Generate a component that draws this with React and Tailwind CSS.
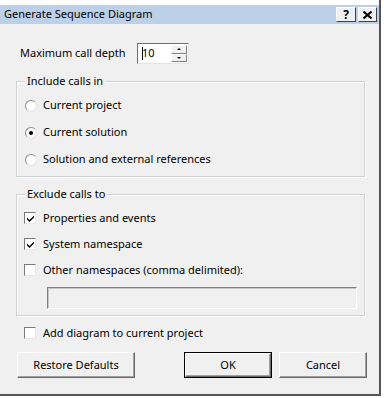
import React from "react";

// Win7 classic-ish dialog bits
function Radio({ checked, label }) {
  return (
    <div className="flex items-center h-[27px] pl-[8px]">
      <span className="w-[12px] h-[12px] rounded-full bg-white border border-t-[#8d8d8d] border-l-[#8d8d8d] border-b-[#e2e2e2] border-r-[#e2e2e2] flex items-center justify-center">
        {checked && <span className="w-[4px] h-[4px] rounded-full bg-black" />}
      </span>
      <span className="ml-[6px]">{label}</span>
    </div>
  );
}

function Check({ checked, label, className = "" }) {
  return (
    <div className={`flex items-center h-[26px] pl-[7px] ${className}`}>
      <span className="w-[12px] h-[12px] bg-white border border-t-[#7a7a7a] border-l-[#7a7a7a] border-b-[#e6e6e6] border-r-[#e6e6e6] flex items-center justify-center">
        {checked && (
          <svg width="9" height="9" viewBox="0 0 9 9">
            <path d="M1 3.5 L3.5 6 L8 1.5 L8 3.5 L3.5 8 L1 5.5 Z" fill="#000" />
          </svg>
        )}
      </span>
      <span className="ml-[7px]">{label}</span>
    </div>
  );
}

function Group({ title, children, className = "" }) {
  return (
    <div
      className={`ml-[16px] w-[349px] border border-[#d0d0d0] shadow-[1px_1px_0_#ffffff,inset_1px_1px_0_#ffffff] ${className}`}
    >
      <div className="-mt-[9px] ml-[8px] px-[2px] w-fit bg-[#f0f0f0] leading-[16px]">
        {title}
      </div>
      {children}
    </div>
  );
}

function Button({ children, primary, className = "" }) {
  return (
    <div
      className={`h-[26px] flex ${primary ? "border border-black" : ""} ${className}`}
    >
      <div className="flex-1 flex items-center justify-center bg-[#f0f0f0] border border-t-white border-l-white border-b-[#696969] border-r-[#696969] shadow-[inset_-1px_-1px_0_#a0a0a0]">
        {children}
      </div>
    </div>
  );
}

export default function App() {
  return (
    <div className="w-[384px] h-[398px] bg-white font-['Noto_Sans',sans-serif] text-[11px] text-black">
      <div className="w-[381px] h-[396px] bg-[#f0f0f0] border-r-2 border-b-2 border-[#555555] flex flex-col">
        {/* title bar */}
        <div className="h-[5px] bg-white" />
        <div className="h-[19px] bg-[#bcd0e8] flex items-center pl-[4px] pr-[2px]">
          <span>Generate Sequence Diagram</span>
          <div className="ml-auto flex gap-[2px]">
            <div className="w-[20px] h-[15px] flex items-center justify-center bg-[#f0f0f0] border border-t-white border-l-white border-b-[#404040] border-r-[#404040] font-bold text-[12px] leading-none">
              ?
            </div>
            <div className="w-[19px] h-[15px] flex items-center justify-center bg-[#f0f0f0] border border-t-white border-l-white border-b-[#404040] border-r-[#404040]">
              <svg width="9" height="8" viewBox="0 0 9 8">
                <path d="M0.5 0.5 L8.5 7.5 M8.5 0.5 L0.5 7.5" stroke="#000" strokeWidth="2" />
              </svg>
            </div>
          </div>
        </div>

        {/* depth */}
        <div className="mt-[19px] h-[21px] flex items-center">
          <span className="pl-[20px] w-[137px]">Maximum call depth</span>
          <div className="w-[52px] h-[21px] bg-white border border-t-[#6d6d6d] border-l-[#6d6d6d] border-b-[#e3e3e3] border-r-[#e3e3e3] flex items-center">
            <span className="ml-[4px] w-[1px] h-[13px] bg-black" />
            <span className="-ml-[1px]">10</span>
            <div className="ml-auto mr-[1px] w-[16px] h-[17px] flex flex-col">
              <div className="flex-1 bg-[#f0f0f0] border border-t-white border-l-white border-b-[#808080] border-r-[#808080] flex items-center justify-center">
                <span className="w-0 h-0 border-l-[2px] border-r-[2px] border-b-[2px] border-l-transparent border-r-transparent border-b-black" />
              </div>
              <div className="flex-1 bg-[#f0f0f0] border border-t-white border-l-white border-b-[#808080] border-r-[#808080] flex items-center justify-center">
                <span className="w-0 h-0 border-l-[2px] border-r-[2px] border-t-[2px] border-l-transparent border-r-transparent border-t-black" />
              </div>
            </div>
          </div>
        </div>

        {/* include calls */}
        <Group title="Include calls in" className="mt-[17px] pb-[3px]">
          <div className="mt-[3px]">
            <Radio label="Current project" />
            <Radio label="Current solution" checked />
            <Radio label="Solution and external references" />
          </div>
        </Group>

        {/* exclude calls */}
        <Group title="Exclude calls to" className="mt-[17px] pb-[6px]">
          <div className="mt-[3px]">
            <Check label="Properties and events" checked />
            <Check label="System namespace" checked />
            <Check label="Other namespaces (comma delimited):" />
          </div>
          <div className="ml-[30px] mt-[4px] w-[310px] h-[22px] bg-[#f0f0f0] border border-t-[#808080] border-l-[#808080] border-b-white border-r-white shadow-[inset_1px_1px_0_#c8c8c8]" />
        </Group>

        <Check label="Add diagram to current project" className="mt-[4px] pl-[24px]" />

        {/* buttons */}
        <div className="mt-[6px] flex pl-[17px]">
          <Button className="w-[118px]">Restore Defaults</Button>
          <Button primary className="ml-[49px] w-[88px]">OK</Button>
          <Button className="ml-[7px] w-[88px]">Cancel</Button>
        </div>
      </div>
    </div>
  );
}
